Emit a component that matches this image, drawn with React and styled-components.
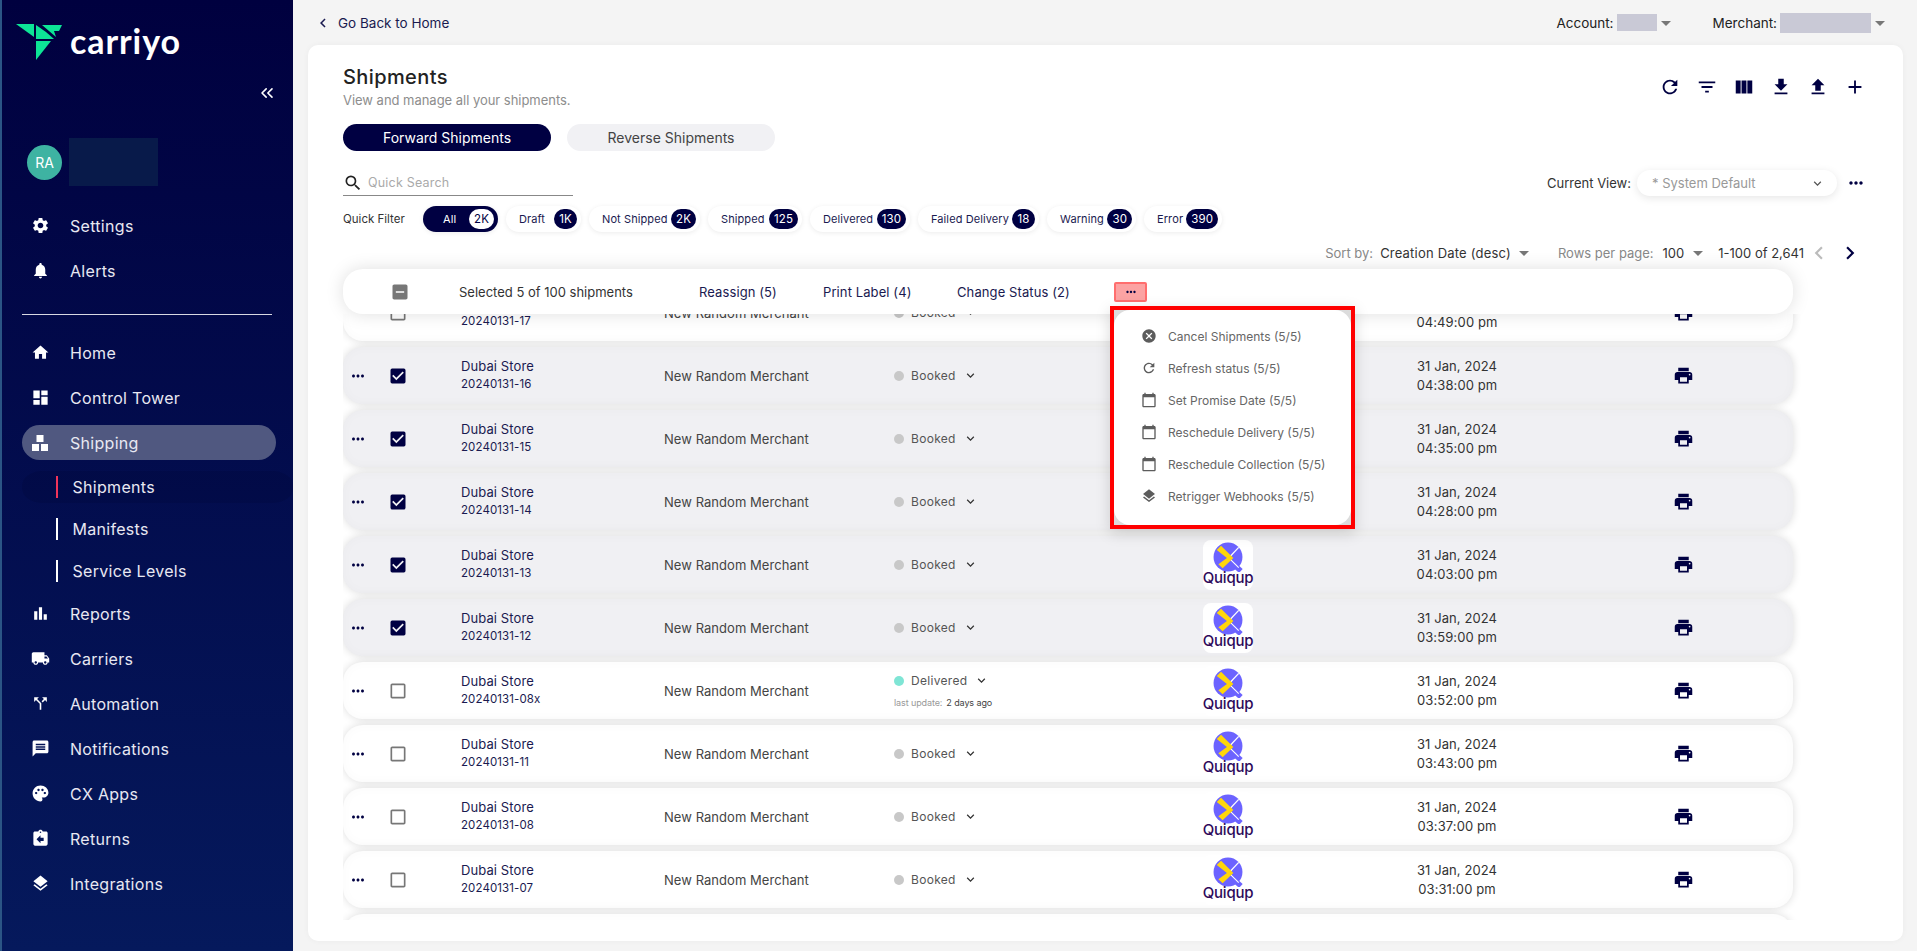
import React from 'react';
import styled, { createGlobalStyle } from 'styled-components';
import { ChevronsLeft } from 'lucide-react';
import {
  MdSettings, MdNotifications, MdHome, MdDashboard, MdBarChart, MdLocalShipping, MdCallSplit, MdMessage,
  MdPalette, MdAssignmentReturn, MdLayers, MdRefresh, MdFilterList, MdViewColumn, MdFileDownload, MdFileUpload,
  MdAdd, MdMoreHoriz, MdPrint, MdCheckBox, MdCheckBoxOutlineBlank, MdIndeterminateCheckBox, MdSearch, MdCancel,
  MdCalendarToday, MdArrowDropDown, MdChevronLeft, MdChevronRight, MdKeyboardArrowDown,
} from 'react-icons/md';

const Global = createGlobalStyle`
  html, body { margin: 0; padding: 0; height: 100%; overflow: hidden; }
  body { font-family: Inter, "Liberation Sans", sans-serif; background: #f4f4f4; }
  * { box-sizing: border-box; }
`;

const Page = styled.div`display: flex; width: 1917px; height: 951px; overflow: hidden;`;
const Sidebar = styled.aside`
  width: 293px; flex: none; height: 951px; border-left: 2px solid #2b5585;
  background: linear-gradient(180deg, #00003f 0%, #05195c 100%); color: #e8e8f2;
`;
const LogoRow = styled.div`display: flex; align-items: flex-start; gap: 7px; height: 40px; margin: 24px 0 0 14px;`;
const LogoText = styled.span`font-family: Lato, sans-serif; font-weight: 700; font-size: 34px; letter-spacing: 0.9px; color: #fff; line-height: 34px;`;
const CollapseRow = styled.div`display: flex; justify-content: flex-end; height: 20px; margin-top: 19px; padding-right: 16px;`;
const UserRow = styled.div`display: flex; align-items: center; gap: 7px; margin: 35px 0 17px 25px; height: 48px;`;
const Avatar = styled.div`width: 35px; height: 35px; border-radius: 50%; background: #3eb3a2; color: #fff; font-size: 14px; display: flex; align-items: center; justify-content: center;`;
const Redacted = styled.div`width: 89px; height: 48px; background: #081a4a;`;
const NavItem = styled.div`display: flex; align-items: center; height: 45px; font-size: 16px; letter-spacing: 0.3px;`;
const NavInner = styled.div`
  display: flex; align-items: center; width: 254px; height: 35px; margin-left: 20px; border-radius: 18px;
  background: #505880;
`;
const NavIcon = styled.span`
  display: flex; justify-content: center; align-items: center; width: ${p => (p.$pill ? 36 : 38)}px;
  margin-left: ${p => (p.$pill ? 0 : 19)}px; margin-right: ${p => (p.$pill ? 12 : 11)}px; font-size: 19px; color: #fff;
`;
const Divider = styled.div`height: 1px; margin: 21px 21px 15px 20px; background: #d8d8e2;`;
const SubList = styled.div`margin-bottom: -1px; padding-top: 1px;`;
const SubItem = styled.div`
  display: flex; align-items: center; height: 42px; margin: 0 0 0 20px; padding-left: 34px; font-size: 16px; letter-spacing: 0.3px;
  border-top: 5px solid transparent; border-bottom: 5px solid transparent; background-clip: padding-box; border-radius: 20px;
  background-color: ${p => (p.$active ? 'rgba(0,0,30,.12)' : 'transparent')};
  &::before { content: ''; width: 1.5px; height: 22px; margin-right: 15px; background: ${p => (p.$active ? '#f0345a' : '#fff')}; }
`;

const Main = styled.main`flex: 1; min-width: 0; display: flex; flex-direction: column; height: 951px;`;
const TopBar = styled.div`height: 45px; display: flex; align-items: center; justify-content: space-between; padding: 0 28px 0 21px; color: #000;`;
const Back = styled.div`display: flex; align-items: center; gap: 6px; font-size: 13.5px; color: #1a1a50; svg { font-size: 18px; }`;
const Selectors = styled.div`display: flex; align-items: center; font-size: 13.5px; color: #222;`;
const SelectorLabel = styled.span`margin-right: 3px;`;
const Mask = styled.span`display: block; width: ${p => p.$w}px; height: ${p => p.$h}px; background: #c9c9d6;`;
const Caret = styled.span`display: flex; font-size: 24px; color: #777; margin-left: ${p => (p.$ml || 0) - 3}px; margin-right: ${p => (p.$mr || 0) - 3}px;`;

const Card = styled.section`
  position: relative; flex: none; height: 896px; margin: 0 14px 10px 15px; padding: 18px 0 21px 35px; background: #fff; border-radius: 10px;
  box-shadow: 0 0 6px rgba(0,0,0,.04); display: flex; flex-direction: column;
`;
const HeadRow = styled.div`display: flex; justify-content: space-between; padding-right: 37px;`;
const Title = styled.h1`margin: 0; font-size: 20px; line-height: 28px; font-weight: 500; color: #222; letter-spacing: 0.4px;`;
const Subtitle = styled.p`margin: 0; font-size: 13px; line-height: 18px; color: #8d8d8d; letter-spacing: -0.03px;`;
const Tools = styled.div`display: flex; gap: 15px; margin-top: 13px; color: #000042; font-size: 22px; svg { display: block; }`;
const Tabs = styled.div`display: flex; gap: 16px; margin-top: 15px;`;
const Tab = styled.div`
  width: 208px; height: 27px; border-radius: 14px; display: flex; align-items: center; justify-content: center; font-size: 14px;
  background: ${p => (p.$active ? '#000042' : '#f1f1f4')}; color: ${p => (p.$active ? '#fff' : '#444')};
`;
const SearchRow = styled.div`display: flex; justify-content: space-between; height: 26px; margin-top: 19px; padding-right: 37px;`;
const Search = styled.div`width: 230px; display: flex; align-items: center; gap: 5px; border-bottom: 1px solid #888; color: #aaa; font-size: 12.5px; letter-spacing: .2px; svg { font-size: 20px; color: #222; }`;
const ViewBox = styled.div`display: flex; align-items: center; font-size: 13px; color: #333;`;
const ViewSelect = styled.div`
  width: 200px; height: 26px; margin: 0 9px 0 6px; padding: 0 12px 0 15px; border-radius: 13px; background: #fff; color: #999; box-shadow: 0 2px 8px rgba(0,0,0,.1);
  display: flex; align-items: center; justify-content: space-between; font-size: 13px; svg { color: #555; font-size: 15px; }
`;
const Dots = styled.span`display: flex; color: #000042; font-size: 20px;`;
const FilterRow = styled.div`display: flex; align-items: center; gap: 8px; height: 26px; margin-top: 10px;`;
const FilterLabel = styled.span`width: 72px; font-size: 11.5px; color: #333;`;
const Chip = styled.div`
  display: flex; align-items: center; justify-content: space-between; height: 26px; border-radius: 13px; font-size: 11px; letter-spacing: .1px; white-space: nowrap; flex: none;
  width: ${p => p.$w}px; padding: 0 4px 0 ${p => (p.$active ? 20 : 13)}px;
  background: ${p => (p.$active ? '#000042' : '#fff')}; color: ${p => (p.$active ? '#fff' : '#1a1a50')}; box-shadow: 0 1px 5px rgba(0,0,0,.08);
`;
const Badge = styled.span`
  height: 20px; min-width: 23px; padding: 0 5px; border-radius: 10px; display: flex; align-items: center; justify-content: center; font-size: 11.5px;
  background: ${p => (p.$active ? '#fff' : '#000042')}; color: ${p => (p.$active ? '#000042' : '#fff')};
`;
const SortRow = styled.div`display: flex; justify-content: flex-end; align-items: center; height: 20px; margin-top: 11px; padding-right: 40px; font-size: 13px; color: #333;`;
const Muted = styled.span`color: #888; margin-right: ${p => p.$mr}px;`;
const SortValue = styled.span`letter-spacing: .2px;`;
const Pager = styled.span`display: flex; font-size: 26px; color: ${p => (p.$off ? '#bbb' : '#000042')}; margin-left: ${p => p.$ml || 0}px;`;

const TableArea = styled.div`position: relative; margin-top: 6px; width: 1450px;`;
const ActionBar = styled.div`
  position: relative; z-index: 2; height: 45px; display: grid; grid-template-columns: 67px 240px 124px 134px 157px 60px; align-items: center; padding-left: 49px;
  background: #fff; border-radius: 20px; box-shadow: 0 0 18px rgba(0,0,0,.13); font-size: 13px; color: #1a1a50; letter-spacing: .1px;
`;
const BoxIcon = styled.span`display: flex; font-size: 20px; margin-left: -2px; color: #777;`;
const PlainText = styled.span`color: #333; letter-spacing: 0;`;
const MoreBtn = styled.div`width: 33px; height: 20px; display: flex; align-items: center; justify-content: center; background: #fca3a3; border: 2px solid #ff6e6e; border-radius: 2px; color: #000042; font-size: 14px;`;
const List = styled.div`height: 606px; overflow: hidden; padding: 0 10px 0 0; margin-right: -10px;`;
const Rows = styled.div`display: flex; flex-direction: column; gap: 6px; margin-top: -30px; width: 1450px;`;
const Row = styled.div`
  flex: none; height: 57px; display: grid; grid-template-columns: 30px 88px 203px 230px 309px 50px 408px 44px; align-items: center; border-radius: 20px;
  background: ${p => (p.$sel ? '#f0f0f3' : '#fff')}; box-shadow: 0 0 9px rgba(0,0,0,.14), inset 0 0 12px rgba(0,0,0,.025);
`;
const RowDots = styled.span`display: flex; justify-content: center; color: #000042; font-size: 18px; visibility: ${p => (p.$hide ? 'hidden' : 'visible')};`;
const Check = styled.span`display: flex; margin-left: 15px; font-size: 20px; color: ${p => (p.$on ? '#000042' : '#777')};`;
const Store = styled.div`font-size: 13px; color: #1a1a50; letter-spacing: .1px; line-height: 17px;`;
const RowId = styled.div`font-size: 11.5px; letter-spacing: .1px; margin-top: 1px;`;
const Merchant = styled.div`font-size: 13px; color: #444; letter-spacing: .05px;`;
const StatusLine = styled.div`display: flex; align-items: center; font-size: 12px; color: #555; letter-spacing: .3px; svg { margin-left: 7px; font-size: 15px; color: #333; }`;
const Dot = styled.span`width: 10px; height: 10px; border-radius: 50%; margin-right: 7px; background: ${p => p.$c};`;
const Updated = styled.div`margin-top: 9px; font-size: 9px; color: #999; letter-spacing: -.1px; b { font-weight: 400; color: #444; margin-left: 4px; }`;
const CarrierTile = styled.div`width: 50px; height: 50px; background: #fff; border-radius: 8px; display: flex; flex-direction: column; align-items: center; padding-top: 2px;`;
const CarrierName = styled.span`font-size: 15px; line-height: 16px; font-weight: 500; color: #2d0a5a; margin-top: -2px; letter-spacing: -.2px;`;
const DateCell = styled.div`text-align: center; font-size: 13px; color: #333; letter-spacing: .1px; line-height: 19px;`;
const PrintCell = styled.span`display: flex; justify-content: center; font-size: 21px; color: #000042;`;

const Popup = styled.div`
  position: absolute; z-index: 3; left: 767px; top: 37px; width: 245px; height: 223px; border: 4px solid #f00; background: #dcdcdc; box-shadow: 0 4px 14px rgba(0,0,0,.15);
`;
const PopupPanel = styled.div`height: 100%; background: #fff; border-radius: 16px; padding: 10px 0 0 27px; display: flex; flex-direction: column;`;
const PopupItem = styled.div`display: flex; align-items: center; height: 32px; font-size: 12px; color: #666; white-space: nowrap;`;
const PopupIcon = styled.span`display: flex; justify-content: center; width: 16px; margin-right: 11px; font-size: 16px; color: #5c5c5c;`;

const CarriyoMark = () => (
  <svg width="47" height="36" viewBox="0 0 47 36" fill="#0de596">
    <polygon points="0,0 18,0 18,13" />
    <polygon points="20,1 20,15 38,15 30,8" />
    <polygon points="26,1 46,1 43,7 38,7 40,13" />
    <polygon points="20,17 35,17 20,36" />
  </svg>
);
const ShippingIcon = () => (
  <svg width="18" height="18" viewBox="0 0 18 18" fill="#fff">
    <rect x="5.5" y="1" width="7" height="7" />
    <rect x="1" y="10" width="7" height="7" />
    <rect x="10" y="10" width="7" height="7" />
  </svg>
);
const QuiqupMark = () => (
  <svg width="30" height="30" viewBox="0 0 28 28">
    <circle cx="14" cy="14" r="13.5" fill="#6c63ff" />
    <line x1="15.5" y1="14" x2="24" y2="5" stroke="#fff" strokeWidth="1.2" />
    <line x1="15" y1="17" x2="26" y2="27" stroke="#6c63ff" strokeWidth="5" />
    <line x1="15" y1="15" x2="24" y2="24" stroke="#fff" strokeWidth="1" />
    <polygon points="3.5,7.5 7.5,3.5 19,15 9,24.5 5,20.7 13,15" fill="#ffd60a" />
  </svg>
);

const navTop = [[MdSettings, 'Settings'], [MdNotifications, 'Alerts']];
const navBottom = [[MdBarChart, 'Reports'], [MdLocalShipping, 'Carriers'], [MdCallSplit, 'Automation'], [MdMessage, 'Notifications'], [MdPalette, 'CX Apps'], [MdAssignmentReturn, 'Returns'], [MdLayers, 'Integrations']];
const chips = [['All', '2K', 75, true], ['Draft', '1K', 75], ['Not Shipped', '2K', 111], ['Shipped', '125', 94], ['Delivered', '130', 100], ['Failed Delivery', '18', 121], ['Warning', '30', 89], ['Error', '390', 78]];
const rows = [
  ['20240131-17', '04:49:00 pm', 0], ['20240131-16', '04:38:00 pm', 1], ['20240131-15', '04:35:00 pm', 1], ['20240131-14', '04:28:00 pm', 1],
  ['20240131-13', '04:03:00 pm', 1], ['20240131-12', '03:59:00 pm', 1], ['20240131-08x', '03:52:00 pm', 0, true], ['20240131-11', '03:43:00 pm', 0],
  ['20240131-08', '03:37:00 pm', 0], ['20240131-07', '03:31:00 pm', 0], ['20240131-06', '03:24:00 pm', 0],
];
const menu = [[MdCancel, 'Cancel Shipments (5/5)'], [MdRefresh, 'Refresh status (5/5)'], [MdCalendarToday, 'Set Promise Date (5/5)'], [MdCalendarToday, 'Reschedule Delivery (5/5)'], [MdCalendarToday, 'Reschedule Collection (5/5)'], [MdLayers, 'Retrigger Webhooks (5/5)']];

export default function App() {
  return (
    <Page>
      <Global />
      <Sidebar>
        <LogoRow><CarriyoMark /><LogoText>carriyo</LogoText></LogoRow>
        <CollapseRow><ChevronsLeft size={20} color="#fff" strokeWidth={1.9} /></CollapseRow>
        <UserRow><Avatar>RA</Avatar><Redacted /></UserRow>
        {navTop.map(([I, t]) => <NavItem key={t}><NavIcon><I /></NavIcon>{t}</NavItem>)}
        <Divider />
        <NavItem><NavIcon><MdHome /></NavIcon>Home</NavItem>
        <NavItem><NavIcon><MdDashboard /></NavIcon>Control Tower</NavItem>
        <NavItem><NavInner><NavIcon $pill><ShippingIcon /></NavIcon>Shipping</NavInner></NavItem>
        <SubList>
          <SubItem $active>Shipments</SubItem>
          <SubItem>Manifests</SubItem>
          <SubItem>Service Levels</SubItem>
        </SubList>
        {navBottom.map(([I, t]) => <NavItem key={t}><NavIcon><I /></NavIcon>{t}</NavItem>)}
      </Sidebar>
      <Main>
        <TopBar>
          <Back><MdChevronLeft />Go Back to Home</Back>
          <Selectors>
            <SelectorLabel>Account:</SelectorLabel><Mask $w={40} $h={17} /><Caret $mr={38}><MdArrowDropDown /></Caret>
            <SelectorLabel>Merchant:</SelectorLabel><Mask $w={91} $h={20} /><Caret><MdArrowDropDown /></Caret>
          </Selectors>
        </TopBar>
        <Card>
          <HeadRow>
            <div><Title>Shipments</Title><Subtitle>View and manage all your shipments.</Subtitle></div>
            <Tools><MdRefresh /><MdFilterList /><MdViewColumn /><MdFileDownload /><MdFileUpload /><MdAdd /></Tools>
          </HeadRow>
          <Tabs><Tab $active>Forward Shipments</Tab><Tab>Reverse Shipments</Tab></Tabs>
          <SearchRow>
            <Search><MdSearch />Quick Search</Search>
            <ViewBox>Current View:<ViewSelect>* System Default<MdKeyboardArrowDown /></ViewSelect><Dots><MdMoreHoriz /></Dots></ViewBox>
          </SearchRow>
          <FilterRow>
            <FilterLabel>Quick Filter</FilterLabel>
            {chips.map(([t, n, w, a]) => <Chip key={t} $w={w} $active={a}>{t}<Badge $active={a}>{n}</Badge></Chip>)}
          </FilterRow>
          <SortRow>
            <Muted $mr={7}>Sort by:</Muted><SortValue>Creation Date (desc)</SortValue><Caret $ml={4} $mr={25}><MdArrowDropDown /></Caret>
            <Muted $mr={9}>Rows per page:</Muted>100<Caret $ml={5} $mr={11}><MdArrowDropDown /></Caret>
            1-100 of 2,641<Pager $off $ml={2}><MdChevronLeft /></Pager><Pager $ml={5}><MdChevronRight /></Pager>
          </SortRow>
          <TableArea>
            <ActionBar>
              <BoxIcon><MdIndeterminateCheckBox /></BoxIcon>
              <PlainText>Selected 5 of 100 shipments</PlainText>
              <span>Reassign (5)</span>
              <span>Print Label (4)</span>
              <span>Change Status (2)</span>
              <MoreBtn><MdMoreHoriz /></MoreBtn>
            </ActionBar>
            <Popup>
              <PopupPanel>
                {menu.map(([I, t]) => <PopupItem key={t}><PopupIcon><I /></PopupIcon>{t}</PopupItem>)}
              </PopupPanel>
            </Popup>
            <List>
              <Rows>
                {rows.map(([id, time, sel, delivered], i) => (
                  <Row key={id} $sel={sel}>
                    <RowDots $hide={i === 0}><MdMoreHoriz /></RowDots>
                    <Check $on={sel}>{sel ? <MdCheckBox /> : <MdCheckBoxOutlineBlank />}</Check>
                    <Store>Dubai Store<RowId>{id}</RowId></Store>
                    <Merchant>New Random Merchant</Merchant>
                    {delivered ? (
                      <div>
                        <StatusLine><Dot $c="#7fe5d5" />Delivered<MdKeyboardArrowDown /></StatusLine>
                        <Updated>last update:<b>2 days ago</b></Updated>
                      </div>
                    ) : (
                      <StatusLine><Dot $c="#c8c8c8" />Booked<MdKeyboardArrowDown /></StatusLine>
                    )}
                    <CarrierTile><QuiqupMark /><CarrierName>Quiqup</CarrierName></CarrierTile>
                    <DateCell>31 Jan, 2024<br />{time}</DateCell>
                    <PrintCell><MdPrint /></PrintCell>
                  </Row>
                ))}
              </Rows>
            </List>
          </TableArea>
        </Card>
      </Main>
    </Page>
  );
}
